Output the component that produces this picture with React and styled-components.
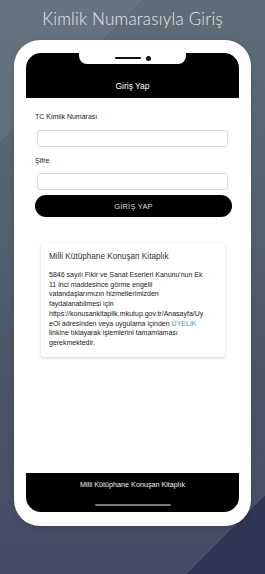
import React from "react";
import styled, { createGlobalStyle } from "styled-components";

const Global = createGlobalStyle`
  html, body {
    margin: 0;
    padding: 0;
  }
  body {
    width: 265px;
    height: 574px;
    overflow: hidden;
    font-family: "Liberation Sans", Arial, sans-serif;
  }
`;

const Backdrop = styled.div`
  width: 265px;
  height: 574px;
  display: flex;
  flex-direction: column;
  align-items: center;
  background:
    linear-gradient(135deg, rgba(0,0,0,0) 90.6%, #2f3653 90.6%),
    linear-gradient(135deg, rgba(255,255,255,0.05) 17%, rgba(255,255,255,0) 17%),
    linear-gradient(180deg, #5d6d78 0%, #56656f 30%, #4b5468 70%, #474b66 100%);
`;

const Heading = styled.h1`
  margin: 0;
  height: 40px;
  line-height: 38px;
  font-family: Lato, "Open Sans", sans-serif;
  font-weight: 300;
  font-size: 17px;
  letter-spacing: 0.2px;
  color: #e6eaed;
`;

const Phone = styled.div`
  width: 213px;
  height: 459px;
  padding: 13px 12px 14px 12px;
  background: #fff;
  border-radius: 26px;
  box-shadow: 0 2px 6px rgba(0,0,0,0.15);
`;

const Screen = styled.div`
  height: 100%;
  border-radius: 15px;
  overflow: hidden;
  display: flex;
  flex-direction: column;
  background: #fff;
`;

const TopBar = styled.div`
  position: relative;
  height: 45px;
  flex: none;
  background: #000;
  color: #fff;
  display: flex;
  align-items: flex-end;
  justify-content: center;
  padding-bottom: 7px;
  box-sizing: border-box;
  font-size: 8.5px;
`;

const Notch = styled.div`
  position: absolute;
  top: 0;
  left: 53px;
  width: 107px;
  height: 11px;
  background: #fff;
  border-radius: 0 0 8px 8px;
  display: flex;
  align-items: center;
  justify-content: center;
  gap: 5px;
`;

const Speaker = styled.span`
  width: 26px;
  height: 2px;
  border-radius: 1px;
  background: #111;
  margin-top: -1px;
`;

const Camera = styled.span`
  width: 5px;
  height: 5px;
  border-radius: 50%;
  background: #111;
  margin-top: -1px;
`;

const Body = styled.div`
  flex: 1;
  padding: 14px 8px 0 9px;
  display: flex;
  flex-direction: column;
  color: #222;
`;

const Label = styled.label`
  font-size: 7px;
  height: 10px;
  line-height: 10px;
  margin-bottom: ${(p) => p.$gap}px;
`;

const Field = styled.div`
  height: 17px;
  margin: 0 3px 0 2px;
  border: 1px solid #dedede;
  border-radius: 3px;
  box-sizing: border-box;
  margin-bottom: ${(p) => p.$gap}px;
`;

const Button = styled.button`
  height: 22px;
  border: none;
  border-radius: 11px;
  background: #000;
  color: #ddd;
  font-family: inherit;
  font-size: 7.5px;
  letter-spacing: 0.2px;
  padding: 0;
  margin-right: -1px;
`;

const Card = styled.div`
  margin: 26px 6px 0 6px;
  padding: 9px 8px 9px 8px;
  background: #fff;
  box-shadow: 0 1px 3px rgba(0,0,0,0.18);
  border-radius: 2px;
`;

const CardTitle = styled.div`
  font-size: 8.2px;
  color: #333;
  margin-bottom: 9px;
`;

const CardText = styled.p`
  margin: 0;
  font-size: 7px;
  line-height: 9.7px;
  color: #222;
`;

const Line = styled.span`
  display: block;
  white-space: nowrap;
`;

const Link = styled.span`
  color: #4a90d9;
`;

const BottomBar = styled.div`
  height: 39px;
  flex: none;
  background: #000;
  color: #f2f2f2;
  display: flex;
  flex-direction: column;
  align-items: center;
  font-size: 7.2px;
  padding-top: 7px;
  box-sizing: border-box;
`;

const HomeBar = styled.span`
  width: 76px;
  height: 2px;
  border-radius: 1px;
  background: #777;
  margin-top: 15px;
`;

const lines = [
  "5846 sayılı Fikir ve Sanat Eserleri Kanunu'nun Ek",
  "11 inci maddesince görme engelli",
  "vatandaşlarımızın hizmetlerimizden",
  "faydalanabilmesi için",
  "https://konusankitaplik.mkutup.gov.tr/Anasayfa/Uy",
];

export default function App() {
  return (
    <>
      <Global />
      <Backdrop>
        <Heading>Kimlik Numarasıyla Giriş</Heading>
        <Phone>
          <Screen>
            <TopBar>
              <Notch>
                <Speaker />
                <Camera />
              </Notch>
              Giriş Yap
            </TopBar>
            <Body>
              <Label $gap={8}>TC Kimlik Numarası</Label>
              <Field $gap={9} />
              <Label $gap={7}>Şifre</Label>
              <Field $gap={5} />
              <Button>GİRİŞ YAP</Button>
              <Card>
                <CardTitle>Milli Kütüphane Konuşan Kitaplık</CardTitle>
                <CardText>
                  {lines.map((l) => (
                    <Line key={l}>{l}</Line>
                  ))}
                  <Line>
                    eOl adresinden veya uygulama içinden <Link>ÜYELİK</Link>
                  </Line>
                  <Line>linkine tıklayarak işlemlerini tamamlaması</Line>
                  <Line>gerekmektedir.</Line>
                </CardText>
              </Card>
            </Body>
            <BottomBar>
              Milli Kütüphane Konuşan Kitaplık
              <HomeBar />
            </BottomBar>
          </Screen>
        </Phone>
      </Backdrop>
    </>
  );
}
